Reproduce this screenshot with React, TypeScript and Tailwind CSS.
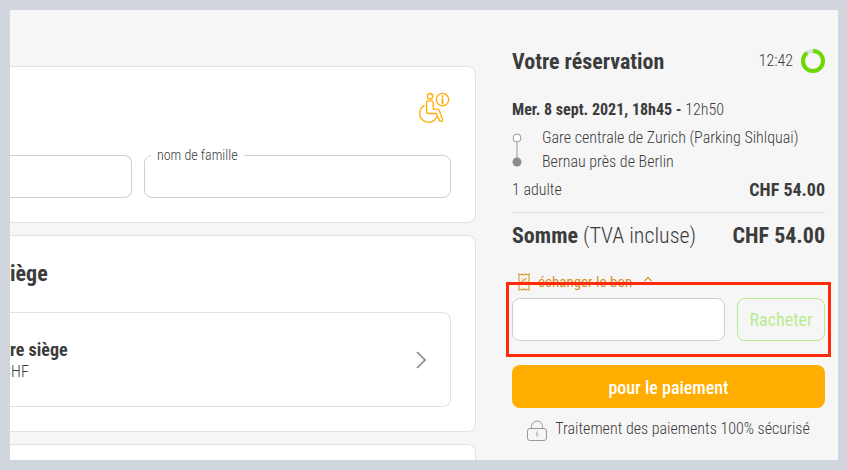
import type { ReactNode } from "react";

const accent = "#ffad00";

function WheelchairInfoIcon() {
  return (
    <svg className="block" width="32" height="32" viewBox="0 0 32 32" fill="none" stroke={accent} strokeWidth="1.3" strokeLinecap="round" strokeLinejoin="round" aria-hidden="true">
      <circle cx="12" cy="4.2" r="2.7" />
      <path d="M10.400 8.800h3q1.800 0 1.800 1.800v6.600h4.100q1.500 0 2.100 1.500l3 8.300q.6 1.800-.9 2.300-1.500.5-2.300-1.200L18.200 21.500H10.600q-2 0-2-2v-8.900q0-1.800 1.800-1.800z" />
      <path d="M6.300 13.600a8.900 8.900 0 1 0 12.500 11.200" />
      <circle cx="24.500" cy="7.600" r="6.200" />
      <path d="M24.500 7v4.200M24.500 4.200v.3" strokeWidth="1.800" />
    </svg>
  );
}

function VoucherIcon() {
  return (
    <svg width="12" height="18" viewBox="0 0 12 18" fill="none" stroke="#d89b33" strokeWidth="1.100" aria-hidden="true">
      <path d="M1 1q1.500 1.600 3 0 2 1.800 4 0 1.500 1.600 3 0v6.500q-1.600 1.500 0 3V17q-1.500-1.600-3 0-2-1.800-4 0-1.500-1.600-3 0v-6.500q1.600-1.500 0-3z" />
      <path d="M3.500 9l5-4M4 5.500v.8M8 8v1" />
    </svg>
  );
}

function LockIcon() {
  return (
    <svg className="mt-1" width="20" height="22" viewBox="0 0 20 22" fill="none" stroke="#9a9a9a" strokeWidth="1" aria-hidden="true">
      <rect x=".5" y="8.500" width="19" height="12" rx="2.500" />
      <path d="M4.500 8.500V6.500a5.500 5.500 0 0 1 11 0v2M10 11.500v5" />
    </svg>
  );
}

function Timer() {
  return (
    <div className="flex items-center gap-2">
      <span className="text-base font-light">12:42</span>
      <svg width="24" height="24" viewBox="0 0 24 24" fill="none" strokeWidth="4" aria-hidden="true">
        <circle cx="12" cy="12" r="10" stroke="#dedede" />
        <circle cx="12" cy="12" r="10" stroke="#6fd800" pathLength="100" strokeDasharray="90 10" transform="rotate(-90 12 12)" />
      </svg>
    </div>
  );
}

function Card({ children, className = "" }: { children?: ReactNode; className?: string }) {
  return <section className={`rounded-r-lg border border-l-0 border-[#e2e2e2] bg-white pr-6 ${className}`}>{children}</section>;
}

function PassengerCard() {
  return (
    <Card className="pt-[25px] pb-6">
      <div className="flex justify-end">
        <button type="button" aria-label="Informations sur l'accessibilité" className="mr-px">
          <WheelchairInfoIcon />
        </button>
      </div>
      <div className="mt-6 flex items-end gap-3">
        <input aria-label="prénom" className="h-[43px] w-[122px] rounded-r-lg border border-l-0 border-[#cfcfcf] px-3 text-base outline-none" />
        <fieldset className="h-[50px] min-w-0 flex-1 rounded-lg border border-[#cfcfcf] px-1.5">
          <legend className="px-1.5 text-sm leading-[14px] font-light">
            <label htmlFor="lastname">nom de famille</label>
          </legend>
          <input id="lastname" className="h-8 w-full bg-transparent px-1.5 text-base outline-none" />
        </fieldset>
      </div>
    </Card>
  );
}

function SeatCard() {
  return (
    <Card className="pt-6 pb-6">
      <h2 className="-ml-2.5 text-[22px] leading-7 font-bold">siège</h2>
      <button type="button" className="mt-6 flex h-[95px] w-full items-center justify-between rounded-r-lg border border-l-0 border-[#e2e2e2] pr-6 text-left">
        <span className="flex flex-col">
          <span className="text-lg leading-6 font-bold">re siège</span>
          <span className="-ml-2 text-base leading-5 font-light">CHF</span>
        </span>
        <svg width="10" height="18" viewBox="0 0 10 18" fill="none" stroke="#8a8a8a" strokeWidth="1.700" aria-hidden="true">
          <path d="M1 1l8 8-8 8" />
        </svg>
      </button>
    </Card>
  );
}

function Voucher() {
  return (
    <div className="relative">
      <button type="button" className="flex h-6 items-center gap-2 px-1.5 text-[15px] text-[#cf922b]">
        <VoucherIcon />
        échanger le bon
        <svg className="ml-1" width="8" height="14" viewBox="0 0 8 14" fill="none" stroke="currentColor" strokeWidth="1.200" aria-hidden="true">
          <path d="M.5 6L4 2.500 7.500 6" />
        </svg>
      </button>
      <div className="mt-1 flex gap-3">
        <input aria-label="code du bon" className="h-[43px] min-w-0 flex-1 rounded-lg border border-[#cfcfcf] bg-white px-3 text-base outline-none" />
        <button type="button" className="h-[43px] w-22 rounded-lg border border-[#b8ec90] text-lg text-[#b8ec90]">Racheter</button>
      </div>
      <div className="pointer-events-none absolute -inset-x-1.5 top-3 -bottom-4 border-[3px] border-[#ff2a0a]" />
    </div>
  );
}

function Summary() {
  return (
    <aside className="w-[313px] shrink-0 pt-[35px]">
      <div className="flex h-8 items-center justify-between">
        <h1 className="text-[22px] font-bold">Votre réservation</h1>
        <Timer />
      </div>
      <p className="mt-[21px] text-base leading-6">
        <strong>Mer. 8 sept. 2021, 18h45 -</strong> <span className="font-light">12h50</span>
      </p>
      <div className="mt-1 flex items-center gap-5">
        <svg width="10" height="34" viewBox="0 0 10 34" fill="none" stroke="#999" aria-hidden="true">
          <path d="M5 9v20" />
          <circle cx="5" cy="5" r="4" fill="#fff" />
          <circle cx="5" cy="29" r="4.500" fill="#8c8c8c" stroke="none" />
        </svg>
        <ul className="text-base leading-6 font-light">
          <li>Gare centrale de Zurich (Parking Sihlquai)</li>
          <li>Bernau près de Berlin</li>
        </ul>
      </div>
      <div className="mt-1 flex h-6 items-center justify-between">
        <span className="text-base font-light">1 adulte</span>
        <strong className="text-lg">CHF 54.00</strong>
      </div>
      <hr className="mt-2.5 border-[#dcdcdc]" />
      <div className="mt-2 flex h-7 items-center justify-between text-[22px]">
        <span><strong>Somme</strong> <span className="font-light">(TVA incluse)</span></span>
        <strong>CHF 54.00</strong>
      </div>
      <div className="mt-[21px]">
        <Voucher />
      </div>
      <button type="button" className="mt-6 h-[43px] w-full rounded-lg bg-[#ffad00] pt-0.5 text-lg font-medium text-white">pour le paiement</button>
      <p className="mt-2 flex items-center justify-center gap-2 text-base font-light">
        <LockIcon />
        Traitement des paiements 100% sécurisé
      </p>
    </aside>
  );
}

export default function App() {
  return (
    <div className="flex min-h-screen bg-[#d1d5dd] p-2.5 pr-[9px] font-['Roboto_Condensed',Roboto,sans-serif] text-[#3c3c3c]">
      <main className="flex min-w-0 flex-1 gap-9 overflow-hidden bg-[#f6f6f6] pr-[13px]">
        <div className="flex min-w-0 flex-1 flex-col gap-3 pt-14">
          <PassengerCard />
          <SeatCard />
          <Card className="flex-1 rounded-br-none border-b-0" />
        </div>
        <Summary />
      </main>
    </div>
  );
}
